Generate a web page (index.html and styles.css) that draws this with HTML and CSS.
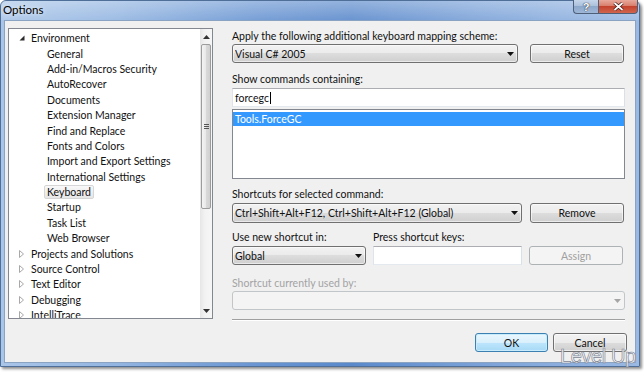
FILE: index.html
```html
<!DOCTYPE html>
<html lang="en">
<head>
  <meta charset="UTF-8" />
  <title>Options</title>
  <link rel="stylesheet" href="styles.css">
</head>
<body>

<div class="window">
  <div class="titlebar">
    <span class="title">Options</span>
    <div class="caption-btns">
      <span class="cap help">?</span>
      <span class="cap close">
        <svg width="11" height="9" viewBox="0 0 11 9"><path d="M1.5 1 L9.5 8 M9.5 1 L1.5 8" stroke="#3a1010" stroke-width="3.2"/><path d="M1.5 1 L9.5 8 M9.5 1 L1.5 8" stroke="#fff" stroke-width="1.8"/></svg>
      </span>
    </div>
  </div>

  <div class="client">
    <div class="content">
      <!-- option tree -->
      <div class="tree">
        <div class="tree-list">
          <div class="node top"><span class="exp"><svg width="6" height="6"><polygon points="5.5,0.5 5.5,5.5 0.5,5.5" fill="#2b2b2b"/></svg></span><span class="txt">Environment</span></div>
          <div class="node child"><span class="txt">General</span></div>
          <div class="node child"><span class="txt">Add-in/Macros Security</span></div>
          <div class="node child"><span class="txt">AutoRecover</span></div>
          <div class="node child"><span class="txt">Documents</span></div>
          <div class="node child"><span class="txt">Extension Manager</span></div>
          <div class="node child"><span class="txt">Find and Replace</span></div>
          <div class="node child"><span class="txt">Fonts and Colors</span></div>
          <div class="node child"><span class="txt">Import and Export Settings</span></div>
          <div class="node child"><span class="txt">International Settings</span></div>
          <div class="node child"><span class="txt selected">Keyboard</span></div>
          <div class="node child"><span class="txt">Startup</span></div>
          <div class="node child"><span class="txt">Task List</span></div>
          <div class="node child"><span class="txt">Web Browser</span></div>
          <div class="node top"><span class="exp"><svg width="5" height="8"><polygon points="0.5,0.5 4.5,4 0.5,7.5" fill="none" stroke="#a8a8a8"/></svg></span><span class="txt">Projects and Solutions</span></div>
          <div class="node top"><span class="exp"><svg width="5" height="8"><polygon points="0.5,0.5 4.5,4 0.5,7.5" fill="none" stroke="#a8a8a8"/></svg></span><span class="txt">Source Control</span></div>
          <div class="node top"><span class="exp"><svg width="5" height="8"><polygon points="0.5,0.5 4.5,4 0.5,7.5" fill="none" stroke="#a8a8a8"/></svg></span><span class="txt">Text Editor</span></div>
          <div class="node top"><span class="exp"><svg width="5" height="8"><polygon points="0.5,0.5 4.5,4 0.5,7.5" fill="none" stroke="#a8a8a8"/></svg></span><span class="txt">Debugging</span></div>
          <div class="node top"><span class="exp"><svg width="5" height="8"><polygon points="0.5,0.5 4.5,4 0.5,7.5" fill="none" stroke="#a8a8a8"/></svg></span><span class="txt">IntelliTrace</span></div>
        </div>
        <div class="scrollbar">
          <div class="sb-arrow up"><svg width="7" height="4"><polygon points="0,4 3.5,0 7,4" fill="#333"/></svg></div>
          <div class="sb-thumb"><span class="grip"></span></div>
          <div class="sb-track"></div>
          <div class="sb-arrow down"><svg width="7" height="4"><polygon points="0,0 3.5,4 7,0" fill="#333"/></svg></div>
        </div>
      </div>

      <!-- keyboard page -->
      <div class="pane">
        <div class="label l1">Apply the following additional keyboard mapping scheme:</div>
        <div class="row r1">
          <div class="combo scheme"><span class="val">Visual C# 2005</span><svg width="7" height="4"><polygon points="0,0 3.5,4 7,0" fill="#111"/></svg></div>
          <button class="btn">Reset</button>
        </div>

        <div class="label l2">Show commands containing:</div>
        <div class="field search">forcegc<span class="caret"></span></div>
        <div class="listbox">
          <div class="list-item">Tools.ForceGC</div>
        </div>

        <div class="label l3">Shortcuts for selected command:</div>
        <div class="row r2">
          <div class="combo shortcuts"><span class="val">Ctrl+Shift+Alt+F12, Ctrl+Shift+Alt+F12 (Global)</span><svg width="7" height="4"><polygon points="0,0 3.5,4 7,0" fill="#111"/></svg></div>
          <button class="btn">Remove</button>
        </div>

        <div class="row labels">
          <div class="label scope-label">Use new shortcut in:</div>
          <div class="label">Press shortcut keys:</div>
        </div>
        <div class="row r3">
          <div class="combo scope"><span class="val">Global</span><svg width="7" height="4"><polygon points="0,0 3.5,4 7,0" fill="#111"/></svg></div>
          <div class="field keys"></div>
          <button class="btn" disabled>Assign</button>
        </div>

        <div class="label disabled l4">Shortcut currently used by:</div>
        <div class="combo off"><span class="val"></span><svg width="7" height="4"><polygon points="0,0 3.5,4 7,0" fill="#a5a5a5"/></svg></div>

        <div class="separator"></div>
      </div>
    </div>

    <div class="footer">
      <button class="btn default">OK</button>
      <button class="btn">Cancel</button>
    </div>
  </div>
</div>

<div class="watermark">Level Up</div>

</body>
</html>
```

FILE: styles.css
```css
body {
  margin: 0;
  background: #fff;
  font-family: Lato, 'Liberation Sans', sans-serif;
  font-size: 10.5px;
  color: #111;
  position: relative;
  height: 372px;
  overflow: hidden;
}

.window {
  width: 640px;
  height: 367px;
  box-sizing: border-box;
  border: 1px solid #4f6f98;
  border-radius: 6px 6px 0 0;
  background: linear-gradient(to right, #a9c5e8 0%, #93b5e1 18%, #6995d2 40%, #5a89cb 55%, #7ba2d8 75%, #9ab9e3 100%);
  box-shadow: 2px 2px 3px rgba(0, 0, 0, 0.45);
  display: flex;
  flex-direction: column;
}

.titlebar {
  height: 19px;
  display: flex;
  align-items: flex-start;
  background: linear-gradient(rgba(255, 255, 255, 0.35), rgba(255, 255, 255, 0.1));
  border-radius: 5px 5px 0 0;
}

.title {
  padding: 1px 0 0 2px;
  font-size: 11.5px;
  line-height: 15px;
  color: #000;
  text-shadow: 0 0 5px rgba(255, 255, 255, 0.9);
}

.caption-btns {
  margin: -1px 1px 0 auto;
  display: flex;
}

.cap {
  height: 14px;
  box-sizing: border-box;
  display: flex;
  align-items: center;
  justify-content: center;
  border: 1px solid #4e5f78;
  border-top: none;
}

.help {
  width: 25px;
  border-right: none;
  border-radius: 0 0 0 4px;
  background: linear-gradient(#c6d6ea, #a9bed9 50%, #8ea8ca 50%, #9fb8d8);
  color: #fff;
  font-family: 'Liberation Sans', sans-serif;
  font-weight: bold;
  font-size: 11px;
  text-shadow: 0 0 1px #223, 0 0 1px #223;
}

.close {
  width: 40px;
  border-radius: 0 0 4px 0;
  background: linear-gradient(#e8a99c, #d77a68 50%, #c4432e 50%, #d1654e);
}

.client {
  flex: 1;
  margin: 0 3px 3px;
  border: 1px solid #8ba3c3;
  background: #f0f0f0;
  padding: 7px 10px 0 3px;
}

.content {
  display: flex;
  gap: 19px;
}

/* tree */

.tree {
  width: 205px;
  height: 291px;
  box-sizing: border-box;
  border: 1px solid #828790;
  background: #fff;
  display: flex;
  overflow: hidden;
}

.tree-list {
  flex: 1;
  padding-top: 1.5px;
  overflow: hidden;
}

.node {
  height: 15.4px;
  display: flex;
  align-items: center;
  white-space: nowrap;
}

.node.top {
  padding-left: 10px;
}

.node.child {
  padding-left: 35px;
}

.exp {
  width: 9px;
  display: flex;
  align-items: center;
}

.txt {
  border: 1px solid transparent;
  border-radius: 2px;
  padding: 0 2px;
  line-height: 12px;
}

.txt.selected {
  border-color: #d6d6d6;
  background: linear-gradient(#f8f8f8, #e6e6e6);
}

.scrollbar {
  width: 12px;
  display: flex;
  flex-direction: column;
  background: linear-gradient(to right, #e6e6e6, #f2f2f2 40%, #f6f6f6);
}

.sb-arrow {
  height: 15px;
  display: flex;
  align-items: center;
  justify-content: center;
}

.sb-arrow.down {
  height: 14px;
}

.sb-thumb {
  height: 165px;
  margin: 0 1px;
  box-sizing: border-box;
  border: 1px solid #9c9c9c;
  border-radius: 2px;
  background: linear-gradient(to right, #f3f3f3, #e8e8e8 50%, #d9d9d9 50%, #d0d0d0);
  display: flex;
  align-items: center;
  justify-content: center;
}

.grip {
  width: 5px;
  height: 5px;
  background: repeating-linear-gradient(#555 0 1px, transparent 1px 2px);
}

.sb-track {
  flex: 1;
}

/* right pane */

.pane {
  width: 393px;
  display: flex;
  flex-direction: column;
}

.label {
  line-height: 14px;
  white-space: nowrap;
}

.label.disabled {
  color: #a3a3a3;
}

.l1 { margin-top: 1px; }
.l2 { margin-top: 9px; }
.l3 { margin-top: 8px; }
.l4 { margin-top: 11px; }

.row {
  display: flex;
  gap: 12px;
}

.r1 { margin-top: 1px; }
.r2 { margin-top: 2px; }
.r3 { margin-top: 2px; gap: 7px; }
.labels { margin-top: 7px; gap: 0; }

.scope-label {
  width: 141px;
}

.combo {
  height: 19px;
  box-sizing: border-box;
  display: flex;
  align-items: center;
  border: 1px solid #707070;
  border-radius: 3px;
  background: linear-gradient(#f2f2f2, #ebebeb 50%, #dddddd 50%, #cfcfcf);
  box-shadow: inset 0 0 0 1px rgba(255, 255, 255, 0.55);
  padding: 0 3px 0 2px;
}

.combo .val {
  flex: 1;
  white-space: nowrap;
  overflow: hidden;
}

.combo.scheme { width: 286px; }
.combo.shortcuts { width: 290px; height: 20px; }
.combo.scope { width: 134px; }

.combo.off {
  margin-top: 1px;
  border-color: #c2c6c9;
  background: #f4f4f4;
  box-shadow: none;
}

.btn {
  width: 94px;
  height: 19px;
  box-sizing: border-box;
  padding: 0;
  margin: 0;
  border: 1px solid #707070;
  border-radius: 3px;
  background: linear-gradient(#f2f2f2, #ebebeb 50%, #dddddd 50%, #cfcfcf);
  box-shadow: inset 0 0 0 1px rgba(255, 255, 255, 0.6);
  font-family: inherit;
  font-size: inherit;
  color: #111;
}

.r2 .btn {
  height: 20px;
  margin-left: -4px;
}

.btn:disabled {
  border-color: #adb2b5;
  background: #f4f4f4;
  box-shadow: none;
  color: #a0a0a0;
}

.field {
  height: 19px;
  box-sizing: border-box;
  border: 1px solid #abadb3;
  border-color: #abadb3 #dbdfe6 #e3e9ef #e2e3ea;
  background: #fff;
  padding: 0 2px;
  display: flex;
  align-items: center;
}

.field.search {
  margin-top: 2px;
}

.field.keys {
  width: 149px;
}

.caret {
  width: 1px;
  height: 12px;
  background: #000;
  margin-left: 1px;
}

.listbox {
  height: 70px;
  margin-top: 2px;
  box-sizing: border-box;
  border: 1px solid #828790;
  background: #fff;
  padding-top: 2px;
}

.list-item {
  line-height: 14px;
  padding-left: 2px;
  background: #3399ff;
  color: #fff;
}

.separator {
  margin-top: 9px;
  border-top: 1px solid #a0a0a0;
  border-bottom: 1px solid #fff;
}

.footer {
  display: flex;
  justify-content: flex-end;
  gap: 5px;
  margin: 12px -2px 0 0;
}

.footer .btn {
  width: 74px;
}

.footer .btn.default {
  width: 73px;
  border-color: #3c7fb1;
  background: linear-gradient(#eaf6fd, #d9f0fc 50%, #bee6fd 50%, #a7d9f5);
  box-shadow: inset 0 0 0 1px #c8ecfb;
}

/* blog watermark over the dialog corner */
.watermark {
  position: absolute;
  left: 560px;
  top: 344px;
  font-family: 'Liberation Sans', sans-serif;
  font-size: 20px;
  line-height: 24px;
  color: rgba(255, 255, 255, 0.85);
  -webkit-text-stroke: 0.7px #7e8593;
  letter-spacing: -0.4px;
}
```
